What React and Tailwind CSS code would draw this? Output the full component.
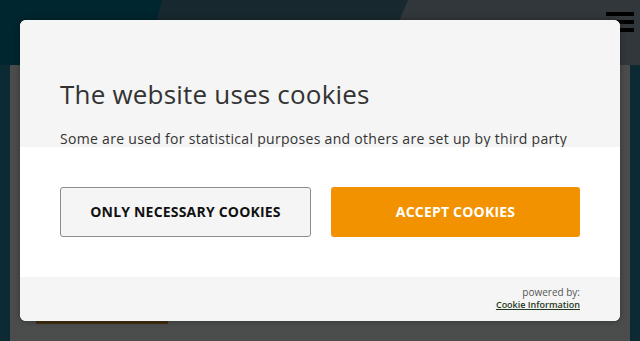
const CookieModal = () => {
  return (
    <div className="absolute left-[20px] top-[20px] w-[600px] h-[301px] rounded-[6px] overflow-hidden bg-white shadow-[0_0_6px_rgba(0,0,0,0.35)] flex flex-col">
      <div className="h-[127px] bg-[#f5f5f5] px-10 pt-[61px] overflow-hidden">
        <h1 className="text-[26px] leading-none text-[#333333] font-normal tracking-[0.2px]">
          The website uses cookies
        </h1>
        <p className="mt-[22px] text-[14px] leading-[20px] text-[#333333] tracking-[0.3px] whitespace-nowrap">
          Some are used for statistical purposes and others are set up by third party
        </p>
      </div>

      <div className="flex-1 px-10 pt-10 flex gap-[20px] items-start">
        <button className="w-[251px] h-[50px] pb-[2px] rounded-[3px] border border-[#8c8c8c] bg-[#f5f5f5] text-[14px] font-bold text-[#111111] tracking-[0.2px]">
          ONLY NECESSARY COOKIES
        </button>
        <button className="w-[249px] h-[50px] pb-[2px] rounded-[3px] bg-[#f39200] text-[14px] font-bold text-white tracking-[0.2px]">
          ACCEPT COOKIES
        </button>
      </div>

      <div className="h-[44px] bg-[#f5f5f5] px-10 pt-[9px] flex flex-col items-end">
        <span className="text-[10px] leading-[12px] text-[#555555]">powered by:</span>
        <a className="mt-[1px] text-[9px] leading-[12px] font-semibold text-[#1f3a1d] underline">
          Cookie Information
        </a>
      </div>
    </div>
  );
};

export default function App() {
  return (
    <div
      className="relative w-[640px] h-[341px] overflow-hidden bg-[#0b2a33]"
      style={{ fontFamily: "'Open Sans', 'Noto Sans', sans-serif" }}
    >
      <header className="relative h-[65px] bg-[#002630]">
        <svg className="absolute inset-0" width="640" height="65" viewBox="0 0 640 65">
          <polygon points="162,0 408,0 380,65 146,65" fill="#17292f" />
          <polygon points="408,0 640,0 640,65 380,65" fill="#32373b" />
        </svg>
        <div className="absolute right-[6px] top-[12px] w-[28px] flex flex-col gap-[4px]">
          <span className="h-[4px] bg-black" />
          <span className="h-[4px] bg-black" />
          <span className="h-[4px] bg-black" />
        </div>
      </header>

      <main className="mx-[10px] h-[276px] bg-[#4b4c4c] px-[26px] pt-[256px]">
        <div className="w-[132px] h-[3px] bg-[#3e2c10]" />
      </main>

      <CookieModal />
    </div>
  );
}
